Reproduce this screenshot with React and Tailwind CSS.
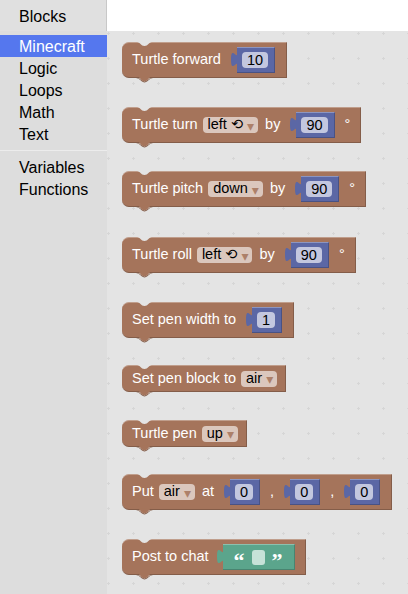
import React from 'react';

const BROWN = '#a5745b';

function Tab({ fill }) {
  return (
    <svg width="7" height="15" viewBox="0 0 8 15" className="self-start mt-[5px] -mr-px overflow-visible" preserveAspectRatio="none">
      <path d="M8,0 C8,10 0,-8 0,7.5 S8,5 8,15 Z" fill={fill} />
    </svg>
  );
}

function Block({ tall, className = '', children }) {
  return (
    <div
      className={`relative flex items-center gap-[5px] bg-[#a5745b] text-white rounded-l-[7px] pl-[10px] pr-[6px] border-t border-t-[#c09e8c] border-b border-b-[#845d49] border-r border-r-[#845d49] ${tall ? 'h-[36px]' : 'h-[27px]'} ${className}`}
    >
      <svg className="absolute -top-px left-[15px]" width="15" height="5">
        <path d="M0,0 C3,0 4,4 7.5,4 C11,4 12,0 15,0 Z" fill="#e4e4e4" />
      </svg>
      {children}
      <svg className="absolute top-full left-[15px] overflow-visible" width="15" height="6">
        <path d="M0,-0.5 C3,-0.5 4,4.5 7.5,4.5 C11,4.5 12,-0.5 15,-0.5 Z" fill={BROWN} />
        <path d="M-1,0.5 C3,0.5 4,5 7.5,5 C11,5 12,0.5 16,0.5" fill="none" stroke="#845d49" />
      </svg>
    </div>
  );
}

function Drop({ children }) {
  return (
    <span className="h-[16px] flex items-center rounded-[4px] bg-[#dbc7bd] text-black pl-[5px] pr-[4px] mr-[2px]">
      {children}
      <span className="ml-[4px] text-[#ad8069] text-[14px] leading-none mt-[1px]">▾</span>
    </span>
  );
}

function Num({ v }) {
  return (
    <div className="flex items-start mx-[5px]">
      <Tab fill="#5b67a5" />
      <div className="h-[26px] flex items-center bg-[#5b67a5] pl-[5px] pr-[6px] border-t border-t-[#8c95c0] border-b border-b-[#495284] border-r border-r-[#495284]">
        <span className="h-[16px] leading-[16px] px-[5px] rounded-[4px] bg-[#c3c7df] text-black">{v}</span>
      </div>
    </div>
  );
}

function Str() {
  return (
    <div className="flex items-start ml-[3px] mr-[4px]">
      <Tab fill="#5ba58c" />
      <div className="h-[26px] flex items-center gap-[7px] bg-[#5ba58c] px-[11px] border-t border-t-[#8cc0ae] border-b border-b-[#498470] border-r border-r-[#498470]">
        <span className="font-['Liberation_Serif',serif] font-bold text-[22px] leading-none h-[15px] text-white">“</span>
        <span className="w-[13px] h-[15px] rounded-[3px] bg-[#c6e2d8]" />
        <span className="font-['Liberation_Serif',serif] font-bold text-[22px] leading-none h-[15px] text-white">”</span>
      </div>
    </div>
  );
}

const categories = ['Minecraft', 'Logic', 'Loops', 'Math', 'Text'];

export default function App() {
  return (
    <div className="w-[408px] h-[594px] bg-white flex overflow-hidden font-['Liberation_Sans','DejaVu_Sans',sans-serif]">
      <div className="w-[107px] flex flex-col shrink-0">
        <div className="h-[31px] bg-[#e0e0e0] border-r border-[#c8c8c8] pl-[19px] pt-px text-[16px] leading-[31px] text-black">
          Blocks
        </div>
        <div className="flex-1 bg-[#dddddd] pt-[4px] text-[16px] text-black">
          {categories.map((c, i) => (
            <div
              key={c}
              className={`h-[22px] leading-[22px] pt-px pl-[19px] ${i === 0 ? 'bg-[#5577ee] text-white' : ''}`}
            >
              {c}
            </div>
          ))}
          <div className="my-[5px] h-px bg-[#ececec]" />
          <div className="h-[22px] leading-[22px] pt-px pl-[19px]">Variables</div>
          <div className="h-[22px] leading-[22px] pt-px pl-[19px]">Functions</div>
        </div>
      </div>

      <div className="flex-1 flex flex-col">
        <div className="h-[31px] bg-white" />
        <div className="flex-1 relative bg-[#e4e4e4] overflow-hidden text-[14.5px]">
          <svg className="absolute inset-0 w-full h-full">
            <defs>
              <pattern id="grid" width="25" height="25" patternUnits="userSpaceOnUse">
                <rect x="0" y="2" width="3" height="1" fill="#d6d6d6" />
                <rect x="1" y="1" width="1" height="3" fill="#d6d6d6" />
              </pattern>
            </defs>
            <rect width="100%" height="100%" fill="url(#grid)" />
          </svg>

          <div className="relative flex flex-col items-start pl-[15px] pt-[11px]">
            <Block tall>
              <span>Turtle forward</span>
              <Num v="10" />
            </Block>

            <Block tall className="mt-[29px]">
              <span>Turtle turn</span>
              <Drop>left ⟲</Drop>
              <span>by</span>
              <Num v="90" />
              <span className="pr-[4px]">°</span>
            </Block>

            <Block tall className="mt-[28px]">
              <span>Turtle pitch</span>
              <Drop>down</Drop>
              <span>by</span>
              <Num v="90" />
              <span className="pr-[4px]">°</span>
            </Block>

            <Block tall className="mt-[30px]">
              <span>Turtle roll</span>
              <Drop>left ⟲</Drop>
              <span>by</span>
              <Num v="90" />
              <span className="pr-[4px]">°</span>
            </Block>

            <Block tall className="mt-[29px]">
              <span>Set pen width to</span>
              <Num v="1" />
            </Block>

            <Block className="mt-[27px]">
              <span>Set pen block to</span>
              <Drop>air</Drop>
            </Block>

            <Block className="mt-[28px]">
              <span>Turtle pen</span>
              <Drop>up</Drop>
            </Block>

            <Block tall className="mt-[27px]">
              <span>Put</span>
              <Drop>air</Drop>
              <span>at</span>
              <Num v="0" />
              <span>,</span>
              <Num v="0" />
              <span>,</span>
              <Num v="0" />
            </Block>

            <Block tall className="mt-[29px]">
              <span>Post to chat</span>
              <Str />
            </Block>
          </div>
        </div>
      </div>
    </div>
  );
}
